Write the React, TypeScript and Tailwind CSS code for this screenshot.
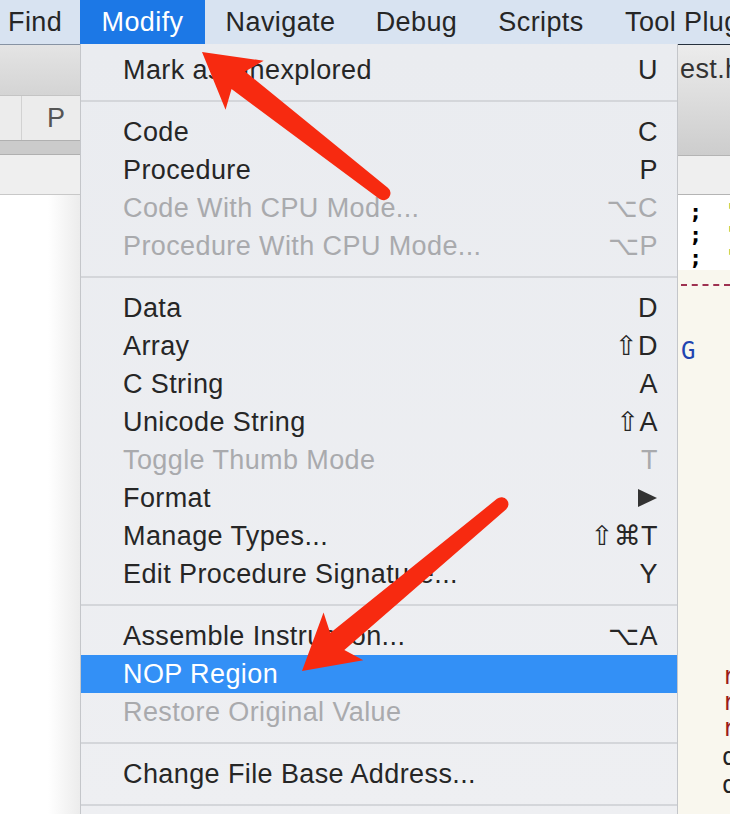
const menuBar = [
  { label: 'Find', w: 'w-[80px]', align: 'pl-[8px]' },
  { label: 'Modify', w: 'w-[125px]', align: 'justify-center', active: true },
  { label: 'Navigate', w: 'w-[151px]', align: 'justify-center' },
  { label: 'Debug', w: 'w-[121px]', align: 'justify-center' },
  { label: 'Scripts', w: 'w-[128px]', align: 'justify-center' },
  { label: 'Tool Plugins', w: 'w-[160px]', align: 'pl-[20px]' },
];

type Item = { label: string; key?: string; disabled?: boolean; selected?: boolean } | 'sep';

const items: Item[] = [
  { label: 'Mark as Unexplored', key: 'U' },
  'sep',
  { label: 'Code', key: 'C' },
  { label: 'Procedure', key: 'P' },
  { label: 'Code With CPU Mode...', key: '⌥C', disabled: true },
  { label: 'Procedure With CPU Mode...', key: '⌥P', disabled: true },
  'sep',
  { label: 'Data', key: 'D' },
  { label: 'Array', key: '⇧D' },
  { label: 'C String', key: 'A' },
  { label: 'Unicode String', key: '⇧A' },
  { label: 'Toggle Thumb Mode', key: 'T', disabled: true },
  { label: 'Format', key: 'submenu' },
  { label: 'Manage Types...', key: '⇧⌘T' },
  { label: 'Edit Procedure Signature...', key: 'Y' },
  'sep',
  { label: 'Assemble Instruction...', key: '⌥A' },
  { label: 'NOP Region', selected: true },
  { label: 'Restore Original Value', disabled: true },
  'sep',
  { label: 'Change File Base Address...' },
  'sep',
];

function Arrow({ x, y, angle, length }: { x: number; y: number; angle: number; length: number }) {
  const l = length;
  return (
    <g transform={`translate(${x} ${y}) rotate(${angle})`}>
      <path
        d={`M0 0 L54 -31 L46 -11 L${l - 6} -7 A7 7 0 0 1 ${l - 6} 7 L46 11 L54 31 Z`}
        fill="#f72a10"
      />
    </g>
  );
}

export default function App() {
  return (
    <div className="relative w-[730px] h-[814px] overflow-hidden bg-white font-['Liberation_Sans','DejaVu_Sans',sans-serif] text-[27px] tracking-[0.4px] text-[#262626]">
      {/* menu bar */}
      <div className="flex h-[44px] bg-[#d8e3f1]">
        {menuBar.map((m) => (
          <div
            key={m.label}
            className={`flex shrink-0 items-center whitespace-nowrap ${m.w} ${m.align} ${m.active ? 'bg-[#1c78e6] text-white' : ''}`}
          >
            {m.label}
          </div>
        ))}
      </div>

      <div className="flex h-[770px]">
        {/* left pane behind the menu */}
        <div className="flex w-[80px] shrink-0 flex-col border-t border-[#8793a3]">
          <div className="h-[50px] bg-gradient-to-b from-[#e4e4e4] to-[#d4d4d4]" />
          <div className="flex h-[45px] border-t border-[#c4c4c4] bg-[#ececec]">
            <div className="w-[22px] border-r border-[#d2d2d2]" />
            <span className="flex items-center pl-[25px] text-[#555]">P</span>
          </div>
          <div className="h-[15px] border-y border-[#b0b0b0] bg-[#cbcbcb]" />
          <div className="h-[40px] border-b border-[#c8c8c8] bg-[#efefef]" />
          <div className="flex-1 bg-gradient-to-r from-white from-60% to-[#ececec]" />
        </div>

        {/* dropdown menu */}
        <div className="w-[598px] shrink-0 border-x border-[#c4c6ca] bg-gradient-to-b from-[#eaecf0] to-[#eeeff2] pt-[7px]">
          {items.map((it, i) =>
            it === 'sep' ? (
              <div key={i} className="flex h-[24px] items-center">
                <div className="h-[2px] w-full bg-[#d4d6da]" />
              </div>
            ) : (
              <div
                key={i}
                className={`flex h-[38px] items-center justify-between pl-[42px] pr-[19px] ${
                  it.selected ? 'bg-[#3390f6] text-white' : it.disabled ? 'text-[#a9aaad]' : ''
                }`}
              >
                <span className="whitespace-nowrap">{it.label}</span>
                {it.key === 'submenu' ? (
                  <svg width="19" height="18" viewBox="0 0 19 18" className="mr-[1px]">
                    <polygon points="0,0 19,9 0,18" fill="#333" />
                  </svg>
                ) : (
                  it.key && <span className="whitespace-nowrap">{it.key}</span>
                )}
              </div>
            ),
          )}
        </div>

        {/* right pane: editor */}
        <div className="flex min-w-0 flex-1 flex-col overflow-hidden border-t border-[#27313d]">
          <div className="h-[110px] bg-gradient-to-b from-[#ececec] to-[#cdcdcd]">
            <div className="flex h-[48px] items-center whitespace-nowrap pl-[2px] text-[#333]">est.h</div>
          </div>
          <div className="h-[40px] border-y border-[#b4b4b4] bg-[#efefef]" />
          <div className="flex h-[75px] flex-col bg-white pt-[5px] font-['DejaVu_Sans_Mono',monospace] text-[22px] leading-[23px] tracking-normal">
            {[0, 1, 2].map((n) => (
              <div key={n} className="flex whitespace-nowrap pl-[11px]">
                <span className="font-bold text-black">;</span>
                <span className="pl-[22px] font-bold text-[#2fb52f]">'</span>
              </div>
            ))}
          </div>
          <div className="flex flex-1 flex-col bg-[#f9f7ee] font-['DejaVu_Sans_Mono',monospace] text-[24px] leading-[26px] tracking-normal">
            <div className="mt-[14px] ml-[3px] border-t-2 border-dashed border-[#9e3150]" />
            <div className="mt-[52px] pl-[3px] text-[#1f45b0]">G</div>
            <div className="mt-[299px] pl-[44px] text-[#9b1b1b]">r</div>
            <div className="pl-[44px] text-[#9b1b1b]">r</div>
            <div className="pl-[44px] text-[#9b1b1b]">r</div>
            <div className="mt-[2px] pl-[44px] leading-[28px] text-[#222]">d</div>
            <div className="pl-[44px] leading-[28px] text-[#222]">d</div>
          </div>
        </div>
      </div>

      {/* annotation arrows */}
      <svg className="pointer-events-none absolute inset-0" width="730" height="814" viewBox="0 0 730 814">
        <Arrow x={202} y={52} angle={37.9} length={236} />
        <Arrow x={302} y={671} angle={-39.9} length={266} />
      </svg>
    </div>
  );
}
